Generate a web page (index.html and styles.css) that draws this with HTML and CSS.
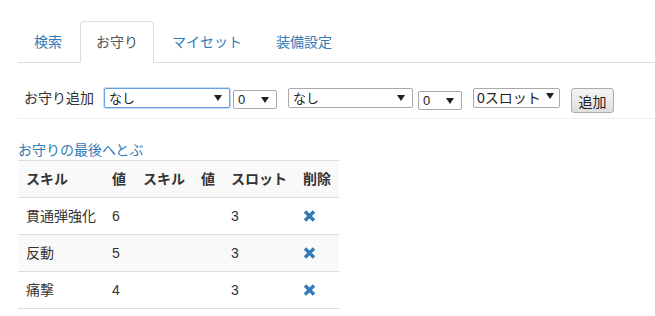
FILE: index.html
```html
<!DOCTYPE html>
<html lang="ja">
<head>
    <meta charset="UTF-8">
    <title>お守り</title>
    <link rel="stylesheet" href="styles.css">
</head>
<body>
    <div class="page">
        <ul class="tabs">
            <li><a href="#">検索</a></li>
            <li class="active"><a href="#">お守り</a></li>
            <li><a href="#">マイセット</a></li>
            <li><a href="#">装備設定</a></li>
        </ul>

        <div class="add-form">
            <span class="label">お守り追加</span>
            <span class="sel sel-skill focus"><select><option>なし</option></select></span>
            <span class="sel sel-num low"><select><option>0</option></select></span>
            <span class="sel sel-skill2"><select><option>なし</option></select></span>
            <span class="sel sel-num low2"><select><option>0</option></select></span>
            <span class="sel sel-slot"><select><option>0スロット</option></select></span>
            <button class="btn">追加</button>
        </div>

        <a class="jump" href="#">お守りの最後へとぶ</a>

        <table class="charms">
            <tr>
                <th class="c1">スキル</th>
                <th class="c2">値</th>
                <th class="c3">スキル</th>
                <th class="c4">値</th>
                <th class="c5">スロット</th>
                <th class="c6">削除</th>
            </tr>
            <tr>
                <td>貫通弾強化</td><td>6</td><td></td><td></td><td>3</td>
                <td><svg class="del" viewBox="0 0 13 12"><path d="M2 1.5L11 10.5M11 1.5L2 10.5"/></svg></td>
            </tr>
            <tr>
                <td>反動</td><td>5</td><td></td><td></td><td>3</td>
                <td><svg class="del" viewBox="0 0 13 12"><path d="M2 1.5L11 10.5M11 1.5L2 10.5"/></svg></td>
            </tr>
            <tr>
                <td>痛撃</td><td>4</td><td></td><td></td><td>3</td>
                <td><svg class="del" viewBox="0 0 13 12"><path d="M2 1.5L11 10.5M11 1.5L2 10.5"/></svg></td>
            </tr>
        </table>
    </div>
</body>
</html>
```

FILE: styles.css
```css
*{
    padding: 0;
    margin: 0;
    box-sizing: border-box;
}
body{
    font-family: "Liberation Sans", "Noto Sans CJK JP", sans-serif;
    font-size: 14px;
    line-height: 20px;
    color: #333;
    background: #fff;
}
a{
    color: #337ab7;
    text-decoration: none;
}
.page{
    padding: 21px 0 0 18px;
}

/* tabs */
.tabs{
    display: flex;
    list-style: none;
    border-bottom: 1px solid #ddd;
}
.tabs li{
    margin-bottom: -1px;
    margin-right: 2px;
}
.tabs a{
    display: block;
    padding: 10px 15px;
    border: 1px solid transparent;
    border-radius: 4px 4px 0 0;
}
.tabs .active a{
    color: #555;
    background: #fff;
    border-color: #ddd #ddd transparent;
}

/* add form */
.add-form{
    display: flex;
    align-items: flex-start;
    padding: 25px 0 5px 6px;
    border-bottom: 1px solid #eee;
}
.label{
    margin-right: 10px;
}
.sel{
    position: relative;
    display: block;
}
.sel select{
    -webkit-appearance: none;
    appearance: none;
    display: block;
    width: 100%;
    height: 20px;
    border: 1px solid #a9a9a9;
    border-radius: 2px;
    background: #fff;
    font-family: "Liberation Sans", "Noto Sans CJK JP", sans-serif;
    font-size: 13px;
    color: #222;
    padding: 0 16px 0 4px;
    outline: none;
}
.sel::after{
    content: "";
    position: absolute;
    right: 8px;
    top: 7px;
    border-left: 4px solid transparent;
    border-right: 4px solid transparent;
    border-top: 6px solid #222;
    pointer-events: none;
}
.sel.focus select{
    border-color: #6a9ee0;
    box-shadow: 0 0 0 1px #c6dbf5;
}
.sel-skill{ width: 126px; margin-right: 3px; }
.sel-skill2{ width: 125px; margin-right: 5px; }
.sel-num{ width: 44px; margin-right: 11px; }
.sel-num select{ height: 19px; }
.low{ margin-top: 2px; }
.low2{ margin-top: 3px; }
.sel-slot{ width: 87px; margin-right: 11px; }
.sel-slot select{ font-size: 14px; padding: 0 14px 0 3px; }
.sel-slot::after{ right: 6px; top: 5px; }

.btn{
    width: 43px;
    height: 25px;
    font-family: "Liberation Sans", "Noto Sans CJK JP", sans-serif;
    font-size: 14px;
    color: #222;
    border: 1px solid #adadad;
    border-radius: 3px;
    background: linear-gradient(#f5f5f5, #dedede);
}

/* table */
.jump{
    display: block;
    margin-top: 21px;
    width: max-content;
}
.charms{
    border-collapse: collapse;
    border-bottom: 1px solid #ddd;
}
.charms th,
.charms td{
    padding: 8px;
    border-top: 1px solid #ddd;
    text-align: left;
    white-space: nowrap;
    height: 37px;
}
.charms th{
    font-weight: bold;
}
.charms tr:nth-child(odd){
    background: #f9f9f9;
}
.c1{ width: 85px; }
.c2{ width: 31px; }
.c3{ width: 58px; }
.c4{ width: 30px; }
.c5{ width: 72px; }
.c6{ width: 44px; }
.del{
    display: block;
    width: 13px;
    height: 12px;
    fill: none;
    stroke: #337ab7;
    stroke-width: 3.4;
    margin-left: 0;
}
```
